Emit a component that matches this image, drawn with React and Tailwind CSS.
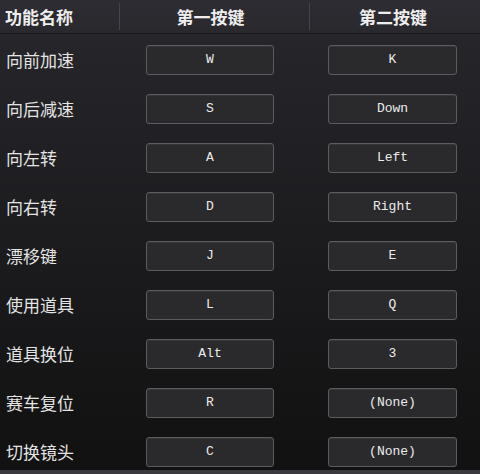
import React from 'react';

const rows = [
    ['向前加速', 'W', 'K'],
    ['向后减速', 'S', 'Down'],
    ['向左转', 'A', 'Left'],
    ['向右转', 'D', 'Right'],
    ['漂移键', 'J', 'E'],
    ['使用道具', 'L', 'Q'],
    ['道具换位', 'Alt', '3'],
    ['赛车复位', 'R', '(None)'],
    ['切换镜头', 'C', '(None)'],
];

const cjk = { fontFamily: '"Noto Sans CJK SC", "Noto Sans", sans-serif' };

const KeyBox = ({ children, className }) => (
    <div
        className={`h-[30px] flex items-center justify-center rounded-[3px] border border-[#5c5c5e] bg-[#2a2a2c] text-[13px] text-[#ececec] shadow-[inset_0_1px_0_rgba(255,255,255,0.06)] ${className}`}
        style={{ fontFamily: '"Liberation Mono", "DejaVu Sans Mono", monospace' }}
    >
        {children}
    </div>
);

export default function App() {
    return (
        <div className="w-[480px] h-[474px] flex flex-col bg-gradient-to-b from-[#28272c] via-[#1c1b1e] to-[#111111] overflow-hidden" style={cjk}>
            {/* header */}
            <div className="h-[34px] flex items-center border-b border-[#18171a] bg-gradient-to-b from-[#2e2d33] to-[#29282d] text-[17px] font-bold text-[#eeeeee]">
                <div className="w-[119px] pl-[5px]">功能名称</div>
                <div className="w-px h-[27px] bg-[#46454b]" />
                <div className="w-[189px] text-center pr-[8px]">第一按键</div>
                <div className="w-px h-[27px] bg-[#46454b]" />
                <div className="flex-1 text-center pr-[4px]">第二按键</div>
            </div>

            <div className="flex-1 flex flex-col gap-[19px] pt-[11px]">
                {rows.map(([name, k1, k2]) => (
                    <div key={name} className="h-[30px] flex items-center">
                        <div className="w-[146px] pl-[6px] text-[17px] text-[#e4e4e4]">{name}</div>
                        <KeyBox className="w-[128px]">{k1}</KeyBox>
                        <div className="w-[54px]" />
                        <KeyBox className="w-[129px]">{k2}</KeyBox>
                    </div>
                ))}
            </div>

            <div className="h-[4px] bg-[#3a393d]" />
        </div>
    );
}
